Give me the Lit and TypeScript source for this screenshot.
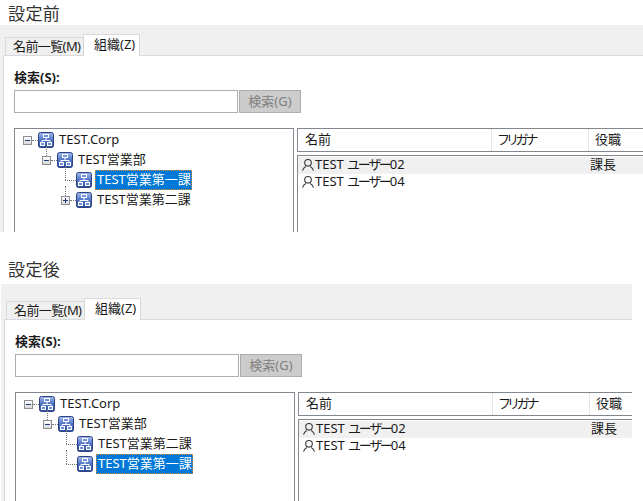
import { LitElement, html, css, svg } from 'lit';
import { customElement, property } from 'lit/decorators.js';

const orgIcon = html`<svg class="org" width="16" height="16" viewBox="0 0 16 16">
  <defs>
    <linearGradient id="g" x1="0" y1="0" x2="0" y2="1">
      <stop offset="0" stop-color="#a5bbec" />
      <stop offset="0.5" stop-color="#4f74c8" />
      <stop offset="1" stop-color="#2b4a9c" />
    </linearGradient>
  </defs>
  <rect x="0.5" y="0.5" width="15" height="15" rx="2" fill="url(#g)" stroke="#2d4382" />
  <path d="M8 6v2.500M4 11V8.500h8V11" fill="none" stroke="#fff" />
  <rect x="5.500" y="2.500" width="5" height="3" fill="#6f8fd8" stroke="#fff" />
  <rect x="2.500" y="10.500" width="4" height="3" fill="#6f8fd8" stroke="#fff" />
  <rect x="9.500" y="10.500" width="4" height="3" fill="#6f8fd8" stroke="#fff" />
</svg>`;

const personIcon = svg`<svg class="person" width="12" height="12" viewBox="0 0 12 12">
  <circle cx="6" cy="3.800" r="3.300" fill="none" stroke="#3c3c3c" stroke-width="1.100" />
  <path d="M.6 11.800c.2-2.300 1.500-3.500 3.200-4.400M11.400 11.800c-.2-2.300-1.500-3.500-3.200-4.400" fill="none" stroke="#3c3c3c" stroke-width="1.100" />
</svg>`;

type Node = { label: string; level: number; toggle?: '+' | '-'; selected?: boolean };

@customElement('settings-panel')
export class SettingsPanel extends LitElement {
  static styles = css`
    :host {
      display: block;
      font-family: "Noto Sans", "Noto Sans CJK JP", sans-serif;
      font-size: 13px;
      color: #1a1a1a;
    }
    .heading {
      font-size: 17px;
      height: 25px;
      box-sizing: border-box;
      padding: var(--heading-top) 0 0 var(--heading-left);
      line-height: 21px;
      letter-spacing: 0.4px;
      color: #333;
    }
    .band {
      background: #f0f0f0;
      display: flex;
      align-items: flex-end;
      padding-left: 5px;
      height: var(--band-height);
    }
    .tab {
      box-sizing: border-box;
      height: 18px;
      width: 79px;
      padding-left: 7px;
      border: 1px solid #d9d9d9;
      border-bottom: none;
      background: #f0f0f0;
      line-height: 17px;
      white-space: nowrap;
      letter-spacing: -0.6px;
    }
    .tab.active {
      background: #fff;
      height: 22px;
      width: 57px;
      padding-left: 10px;
      margin-bottom: -1px;
      margin-left: -1px;
      position: relative;
      line-height: 19px;
      letter-spacing: 0;
    }
    .frame {
      background: #f0f0f0;
      padding-left: 3px;
    }
    .content {
      box-sizing: border-box;
      height: var(--content-height);
      background: #fff;
      border-top: 1px solid #d9d9d9;
      border-left: 1px solid #d9d9d9;
      padding: 13px 0 0 10px;
      overflow: hidden;
    }
    .label {
      font-weight: 700;
      line-height: 17px;
      height: 21px;
    }
    .search {
      display: flex;
      gap: 1px;
    }
    .input {
      box-sizing: border-box;
      width: 224px;
      height: 23px;
      border: 1px solid #abadb3;
      background: #fff;
    }
    .button {
      box-sizing: border-box;
      width: 62px;
      height: 23px;
      border: 1px solid #adadad;
      background: #cccccc;
      color: #808080;
      text-align: center;
      line-height: 20px;
    }
    .split {
      display: flex;
      margin-top: 15px;
      gap: 3px;
    }
    .tree {
      box-sizing: border-box;
      width: 280px;
      height: 120px;
      border: 1px solid #828790;
      padding: 1px 0 0 8px;
      flex: none;
    }
    .node {
      display: flex;
      align-items: center;
      height: 20px;
      position: relative;
    }
    .indent {
      flex: none;
    }
    .toggle {
      box-sizing: border-box;
      width: 9px;
      height: 9px;
      border: 1px solid #8f8f8f;
      background: linear-gradient(#fff, #d8d8d8);
      position: relative;
      flex: none;
    }
    .toggle::before {
      content: '';
      position: absolute;
      left: 1px;
      top: 3px;
      width: 5px;
      height: 1px;
      background: #1f3a7a;
    }
    .toggle.plus::after {
      content: '';
      position: absolute;
      left: 3px;
      top: 1px;
      width: 1px;
      height: 5px;
      background: #1f3a7a;
    }
    .dash {
      width: 6px;
      border-top: 1px dotted #777;
      flex: none;
    }
    .dash.long {
      width: 11px;
      margin-left: 4px;
    }
    .stem {
      position: absolute;
      top: -4px;
      height: 14px;
      border-left: 1px dotted #777;
    }
    .org {
      flex: none;
      display: block;
    }
    .text {
      margin-left: 3px;
      padding: 0 1px 0 2px;
      line-height: 19px;
      height: 20px;
      white-space: nowrap;
    }
    .text.selected {
      background: #0078d7;
      color: #fff;
      outline: 1px dotted #d98a2b;
      outline-offset: -1px;
    }
    .right {
      flex: 1;
      min-width: 0;
      display: flex;
      flex-direction: column;
      gap: 3px;
    }
    .header {
      box-sizing: border-box;
      height: 24px;
      border: 1px solid #828790;
      border-right: none;
      display: grid;
      grid-template-columns: 194px 97px 1fr;
      line-height: 21px;
    }
    .header div {
      padding-left: 6px;
      border-right: 1px solid #e5e5e5;
    }
    .header div:first-child {
      padding-left: 7px;
    }
    .header div:last-child {
      border-right: none;
    }
    .kana {
      font-feature-settings: "palt";
      letter-spacing: -2px;
    }
    .list {
      box-sizing: border-box;
      flex: 1;
      border: 1px solid #828790;
      border-right: none;
      padding-top: 1px;
    }
    .row {
      display: grid;
      grid-template-columns: 291px 1fr;
      height: 17px;
      line-height: 14px;
      padding-left: 1px;
    }
    .row.shaded {
      background: #f0f0f0;
    }
    .row .name {
      display: flex;
      align-items: center;
      height: 13px;
      gap: 1px;
      white-space: pre;
    }
    .post {
      height: 13px;
    }
    .person {
      margin: 3px 0 0 3px;
      flex: none;
    }
  `;

  @property() title = '';
  @property({ attribute: false }) nodes: Node[] = [];

  renderNode(n: Node) {
    return html`<div class="node">
      ${n.level > 0 ? html`<span class="stem" style="left:${19 * n.level + 4}px"></span>` : ''}
      <span class="indent" style="width:${19 * n.level}px"></span>
      ${n.toggle
        ? html`<span class="toggle ${n.toggle === '+' ? 'plus' : ''}"></span><span class="dash"></span>`
        : html`<span class="dash long"></span>`}
      ${orgIcon}
      <span class="text ${n.selected ? 'selected' : ''}">${n.label}</span>
    </div>`;
  }

  renderUser(id: string, post: string, shaded: boolean) {
    return html`<div class="row ${shaded ? 'shaded' : ''}">
      <span class="name">${personIcon}<span>TEST <span class="kana">ユーザー</span>${id}</span></span>
      <span class="post">${post}</span>
    </div>`;
  }

  render() {
    return html`
      <div class="heading">${this.title}</div>
      <div class="band">
        <div class="tab">名前一覧(M)</div>
        <div class="tab active">組織(Z)</div>
      </div>
      <div class="frame">
        <div class="content">
          <div class="label">検索(S):</div>
          <div class="search">
            <div class="input"></div>
            <div class="button">検索(G)</div>
          </div>
          <div class="split">
            <div class="tree">${this.nodes.map((n) => this.renderNode(n))}</div>
            <div class="right">
              <div class="header"><div>名前</div><div><span class="kana">フリガナ</span></div><div>役職</div></div>
              <div class="list">
                ${this.renderUser('02', '課長', true)}
                ${this.renderUser('04', '', false)}
              </div>
            </div>
          </div>
        </div>
      </div>
    `;
  }
}

const before: Node[] = [
  { label: 'TEST.Corp', level: 0, toggle: '-' },
  { label: 'TEST営業部', level: 1, toggle: '-' },
  { label: 'TEST営業第一課', level: 2, selected: true },
  { label: 'TEST営業第二課', level: 2, toggle: '+' },
];

const after: Node[] = [
  { label: 'TEST.Corp', level: 0, toggle: '-' },
  { label: 'TEST営業部', level: 1, toggle: '-' },
  { label: 'TEST営業第二課', level: 2 },
  { label: 'TEST営業第一課', level: 2, selected: true },
];

@customElement('app-root')
export class AppRoot extends LitElement {
  static styles = css`
    :host {
      display: block;
      width: 643px;
      height: 501px;
      overflow: hidden;
      background: #fff;
    }
    .first {
      --band-height: 30px;
      --content-height: 177px;
      --heading-top: 3px;
      --heading-left: 8px;
    }
    .second {
      --band-height: 35px;
      --content-height: 182px;
      --heading-top: 0px;
      --heading-left: 7px;
      margin-top: 27px;
      margin-left: 1px;
      width: 631px;
    }
  `;

  render() {
    return html`
      <settings-panel class="first" title="設定前" .nodes=${before}></settings-panel>
      <settings-panel class="second" title="設定後" .nodes=${after}></settings-panel>
    `;
  }
}
